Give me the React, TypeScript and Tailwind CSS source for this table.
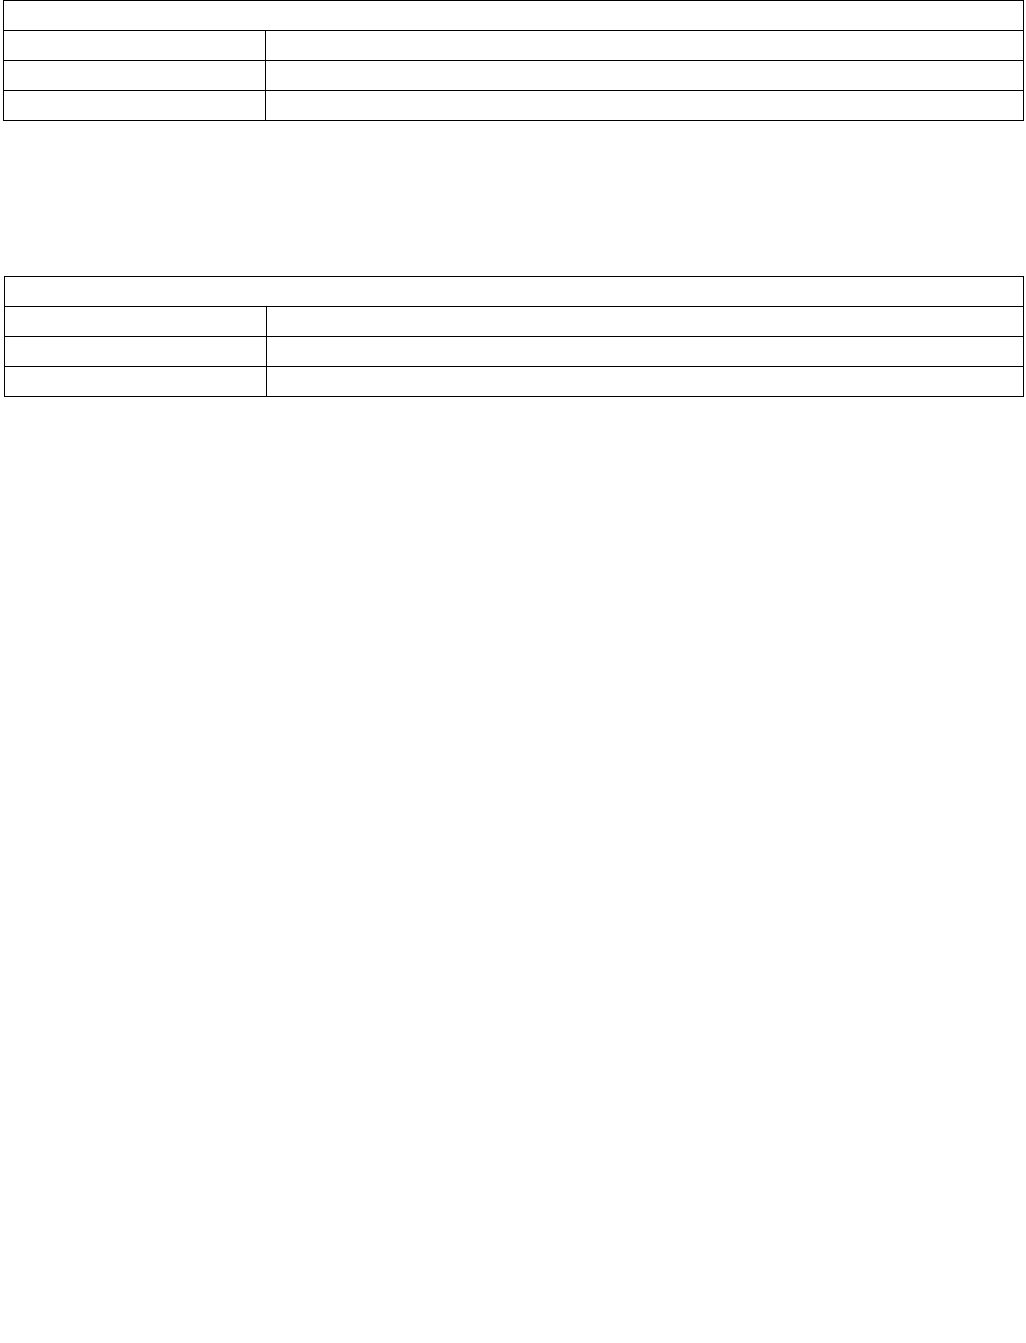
import React from 'react';

interface InfoTableProps {
  rows?: number;
  className?: string;
}

// Empty bordered table: one full-width header row, then label/value rows
const InfoTable: React.FC<InfoTableProps> = ({ rows = 3, className = '' }) => {
  return (
    <div className={`border border-black bg-white ${className}`}>
      <div className="h-[29px]" />
      {Array.from({ length: rows }).map((_, i) => (
        <div key={i} className="flex h-[30px] border-t border-black">
          <div className="w-[261px] shrink-0" />
          <div className="flex-1 border-l border-black" />
        </div>
      ))}
    </div>
  );
};

export default function App() {
  return (
    <div className="min-h-[1343px] w-[1026px] bg-white font-['Liberation_Sans',Arial,sans-serif] text-black">
      <InfoTable className="ml-[3px] w-[1021px]" />
      <InfoTable className="ml-[4px] mt-[155px] w-[1020px]" />
    </div>
  );
}
